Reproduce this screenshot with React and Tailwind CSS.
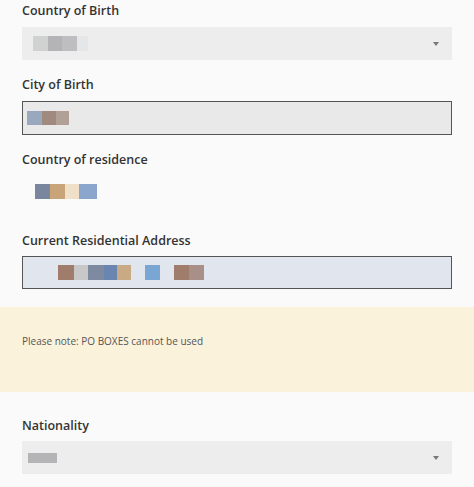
import React from "react";

const font = { fontFamily: '"Open Sans", "Noto Sans", sans-serif' };

function Blocks({ items }) {
  return (
    <div className="flex items-center">
      {items.map((b, i) =>
        b.gap ? (
          <span key={i} className="block h-[15px]" style={{ width: b.gap }} />
        ) : (
          <span key={i} className="block h-[15px]" style={{ width: b.w, background: b.c }} />
        )
      )}
    </div>
  );
}

function Label({ children, className = "" }) {
  return <div className={"text-[12.5px] font-semibold leading-[18px] text-[#333] " + className}>{children}</div>;
}

function Caret() {
  return (
    <svg width="6" height="4" viewBox="0 0 6 4" className="text-[#777]">
      <path d="M0 0h6L3 4z" fill="currentColor" />
    </svg>
  );
}

export default function App() {
  return (
    <div className="min-h-[487px] w-full bg-[#fafafa] pt-[2px]" style={font}>
      <div className="px-[22px]">
        <Label>Country of Birth</Label>
        <div className="mt-[7px] flex h-[33px] items-center justify-between bg-[#ededee] pl-[11px] pr-[13px]">
          <Blocks
            items={[
              { w: 15, c: "#d0d1d1" },
              { w: 14, c: "#b4b4b6" },
              { w: 15, c: "#bebec0" },
              { w: 11, c: "#e4e6e8" },
            ]}
          />
          <Caret />
        </div>

        <Label className="mt-[16px]">City of Birth</Label>
        <div className="mt-[7px] flex h-[34px] items-center border border-[#555] bg-[#e9e9ea] pl-[4px]">
          <div className="flex items-center">
            <span className="block h-[14px] w-[15px] bg-[#9aa8be]" />
            <span className="block h-[14px] w-[14px] bg-[#a08a80]" />
            <span className="block h-[14px] w-[13px] bg-[#b0a096]" />
          </div>
        </div>

        <Label className="mt-[16px]">Country of residence</Label>
        <div className="mt-[5px] flex h-[34px] items-center pl-[13px]">
          <Blocks
            items={[
              { w: 15, c: "#7a869e" },
              { w: 15, c: "#c8a478" },
              { w: 14, c: "#f0e0c8" },
              { w: 18, c: "#8aa6cc" },
            ]}
          />
        </div>

        <Label className="mt-[24px]">Current Residential Address</Label>
        <div className="mt-[6px] flex h-[33px] items-center border border-[#555] bg-[#e1e5ed] pl-[35px]">
          <Blocks
            items={[
              { w: 16, c: "#a07c6c" },
              { w: 14, c: "#c8c8c8" },
              { w: 16, c: "#7e8aa0" },
              { w: 13, c: "#6a86b0" },
              { w: 14, c: "#c8aa84" },
              { gap: 14 },
              { w: 15, c: "#7aa6d4" },
              { gap: 14 },
              { w: 15, c: "#a07c6c" },
              { w: 15, c: "#a89088" },
            ]}
          />
        </div>
      </div>

      <div className="mt-[18px] h-[85px] bg-[#fbf2dc] px-[22px] pt-[26px]">
        <p className="text-[10px] leading-[16px] text-[#555]">Please note: PO BOXES cannot be used</p>
      </div>

      <div className="px-[22px]">
        <Label className="mt-[25px]">Nationality</Label>
        <div className="mt-[6px] flex h-[33px] items-center justify-between bg-[#ededee] pl-[6px] pr-[13px]">
          <span className="block h-[10px] w-[29px] bg-[#b4b4b6]" />
          <Caret />
        </div>
      </div>
    </div>
  );
}
